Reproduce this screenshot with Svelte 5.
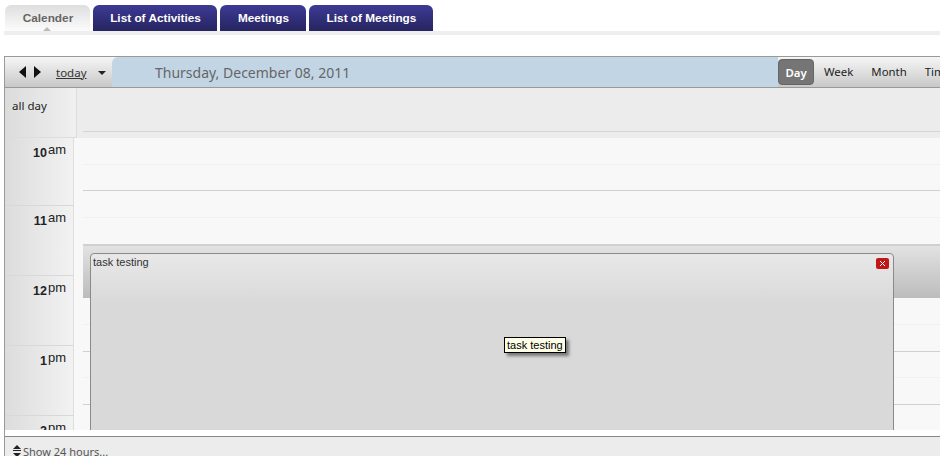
<script>
	const tabs = [
		{ label: 'Calender', width: 85, active: true },
		{ label: 'List of Activities', width: 124 },
		{ label: 'Meetings', width: 86 },
		{ label: 'List of Meetings', width: 124 }
	];
	const hours = [
		{ n: '10', s: 'am', h: 68 },
		{ n: '11', s: 'am', h: 70 },
		{ n: '12', s: 'pm', h: 70 },
		{ n: '1', s: 'pm', h: 70 },
		{ n: '2', s: 'pm', h: 70 }
	];
	const slots = Array.from({ length: 12 }, (_, i) => i);
</script>

<div class="page">
	<nav class="tabs">
		{#each tabs as tab}
			<div class="tab" class:active={tab.active} style="width: {tab.width}px">
				{tab.label}
				{#if tab.active}<span class="caret"></span>{/if}
			</div>
		{/each}
	</nav>

	<div class="cal">
		<div class="toolbar">
			<div class="nav">
				<span class="arrow left"></span>
				<span class="arrow right"></span>
				<span class="today">today</span>
				<span class="down"></span>
			</div>
			<div class="title">Thursday, December 08, 2011</div>
			<div class="views">
				<span class="view on">Day</span>
				<span class="view week">Week</span>
				<span class="view month">Month</span>
				<span class="view">Timeline</span>
			</div>
		</div>

		<div class="allday">
			<div class="allday-label">all day</div>
			<div class="allday-main"><div class="allday-line"></div></div>
		</div>

		<div class="body">
			<div class="gutter">
				{#each hours as hour}
					<div class="hour" style="height: {hour.h}px">
						<b>{hour.n}</b><span>{hour.s}</span>
					</div>
				{/each}
			</div>
			<div class="grid">
				{#each slots as i}
					<div class="slot" class:solid={i % 2 === 1}></div>
				{/each}
			</div>
			<div class="event"></div>
			<div class="dialog">
				<div class="dialog-title">task testing</div>
				<span class="close">
					<svg width="7" height="7" viewBox="0 0 7 7" fill="none" stroke="#fff" stroke-width="1">
						<path d="M1 1l5 5M6 1l-5 5" />
					</svg>
				</span>
				<div class="tip">task testing</div>
			</div>
		</div>

		<div class="footer">
			<svg class="updown" width="8" height="12" viewBox="0 0 8 12" fill="#222">
				<path d="M4 0l4 4H0zM0 5h8v1H0zM0 8h8l-4 4z" />
			</svg>
			<span>Show 24 hours...</span>
		</div>
	</div>
</div>

<style>
	:global(body) {
		margin: 0;
		background: #fff;
	}

	.page {
		width: 940px;
		height: 468px;
		overflow: hidden;
		font-family: 'Noto Sans', 'Open Sans', sans-serif;
	}

	.tabs {
		display: flex;
		gap: 3px;
		height: 26px;
		margin: 5px 0 0 4px;
		padding-left: 1px;
		border-bottom: 4px solid #eeeeee;
	}

	.tab {
		position: relative;
		display: flex;
		align-items: center;
		justify-content: center;
		padding-left: 1px;
		box-sizing: border-box;
		border-radius: 6px 6px 0 0;
		background: linear-gradient(#3d3a96, #26245f);
		color: #fff;
		font: bold 11.8px 'Liberation Sans', Arial, sans-serif;
	}

	.tab.active {
		background: linear-gradient(#dedede, #fcfcfc);
		color: #666;
	}

	.caret {
		position: absolute;
		left: 38px;
		bottom: 0;
		border: 4px solid transparent;
		border-top: 0;
		border-bottom: 4px solid #bbb;
	}

	.cal {
		margin: 21px 0 0 4px;
		border-left: 1px solid #999;
		border-top: 1px solid #999;
	}

	.toolbar {
		display: flex;
		height: 30px;
		border-bottom: 1px solid #999;
		background: linear-gradient(#f6f6f6, #c8c8c8);
	}

	.nav {
		display: flex;
		align-items: center;
		width: 107px;
		flex: none;
		padding-left: 14px;
		box-sizing: border-box;
	}

	.arrow {
		border: 6px solid transparent;
		border-left: 0;
		border-right: 7px solid #111;
	}

	.arrow.right {
		margin-left: 8px;
		border: 6px solid transparent;
		border-right: 0;
		border-left: 7px solid #111;
	}

	.today {
		margin-left: 15px;
		color: #333;
		font-size: 11.5px;
		text-decoration: underline;
	}

	.down {
		margin-left: 11px;
		margin-top: 2px;
		border: 4px solid transparent;
		border-bottom: 0;
		border-top: 4px solid #222;
	}

	.title {
		width: 666px;
		flex: none;
		padding-left: 43px;
		box-sizing: border-box;
		border-radius: 6px 0 0 0;
		background: #c2d5e5;
		color: #666;
		font-size: 14px;
		line-height: 31px;
	}

	.views {
		display: flex;
		align-items: center;
		gap: 3px;
		font-size: 11.4px;
		color: #222;
		white-space: nowrap;
	}

	.view {
		padding: 0 5px 2px;
	}

	.view.week {
		margin-left: 2px;
		margin-right: 5px;
	}

	.view.month {
		margin-right: 5px;
	}

	.view.on {
		width: 36px;
		height: 26px;
		padding: 0;
		line-height: 25px;
		text-align: center;
		box-sizing: border-box;
		border: 1px solid #666;
		border-radius: 4px;
		background: #757575;
		color: #fff;
		font-weight: 600;
	}

	.allday {
		display: flex;
		height: 50px;
		background: #ececec;
	}

	.allday-label {
		width: 72px;
		flex: none;
		padding: 10px 0 0 7px;
		box-sizing: border-box;
		border-right: 1px solid #ddd;
		border-bottom: 1px solid #ddd;
		background: linear-gradient(90deg, #dcdcdc, #f0f0f0);
		color: #222;
		font-size: 11.5px;
	}

	.allday-main {
		flex: 1;
	}

	.allday-line {
		margin: 43px 0 0 6px;
		border-top: 1px solid #d4d4d4;
	}

	.body {
		position: relative;
		display: flex;
		height: 292px;
		overflow: hidden;
		background: #fff;
		border-bottom: 6px solid #fff;
		box-sizing: content-box;
	}

	.gutter {
		width: 68px;
		flex: none;
		height: 292px;
		overflow: hidden;
		border-right: 1px solid #ddd;
		background: linear-gradient(90deg, #dcdcdc, #f2f2f2);
	}

	.hour {
		display: flex;
		justify-content: flex-end;
		align-items: flex-start;
		gap: 1px;
		padding: 5px 7px 0 0;
		box-sizing: border-box;
		border-bottom: 1px solid #d8d8d8;
		color: #222;
		font: 12px 'Liberation Sans', Arial, sans-serif;
	}

	.hour b {
		margin-top: 3px;
		font-size: 12.5px;
	}

	.hour span {
		font-size: 13px;
		line-height: 14px;
	}

	.grid {
		flex: 1;
		margin-left: 9px;
		background: #f8f8f8;
		box-shadow: -9px 0 0 #f8f8f8;
	}

	.slot {
		height: 25.7px;
		border-bottom: 1px solid #f0f0f0;
	}

	.slot.solid {
		border-bottom-color: #d0d0d0;
	}

	.event {
		position: absolute;
		left: 78px;
		right: 0;
		top: 107px;
		height: 53px;
		background: linear-gradient(#e2e2e2, #bcbcbc);
		border-top: 1px solid #d0d0d0;
		box-sizing: border-box;
	}

	.dialog {
		position: absolute;
		left: 85px;
		top: 115px;
		width: 804px;
		height: 190px;
		box-sizing: border-box;
		border: 1px solid #8a8a8a;
		border-radius: 4px 4px 0 0;
		background: linear-gradient(#e8e8e8, #d9d9d9 50px);
	}

	.dialog-title {
		padding: 2px 0 0 2px;
		color: #333;
		font: 11px 'Liberation Sans', Arial, sans-serif;
	}

	.close {
		position: absolute;
		top: 4px;
		right: 4px;
		display: flex;
		align-items: center;
		justify-content: center;
		width: 13px;
		height: 11px;
		border-radius: 2px;
		background: #c01818;
	}

	.tip {
		position: absolute;
		left: 413px;
		top: 83px;
		padding: 1px 2px;
		border: 1px solid #000;
		background: #ffffe8;
		box-shadow: 3px 3px 3px #777;
		color: #000;
		font: 11px 'Liberation Sans', Arial, sans-serif;
	}

	.footer {
		display: flex;
		align-items: flex-start;
		gap: 2px;
		height: 20px;
		padding: 8px 0 0 8px;
		box-sizing: border-box;
		border-top: 1px solid #888;
		background: #ececec;
		color: #555;
		font-size: 11px;
		line-height: 14px;
		overflow: hidden;
	}

	.updown {
		flex: none;
	}
</style>
